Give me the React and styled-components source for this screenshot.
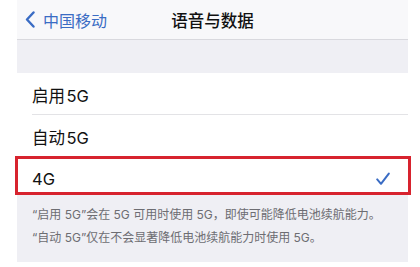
import React from 'react'
import styled, { createGlobalStyle } from 'styled-components'

const GlobalStyle = createGlobalStyle`
  html, body {
    margin: 0;
    padding: 0;
    background: #ffffff;
  }
  body {
    font-family: Inter, "Noto Sans CJK SC", sans-serif;
    -webkit-font-smoothing: antialiased;
  }
`

const options = [
  { label: '启用\u200a5G', selected: false },
  { label: '自动\u200a5G', selected: false },
  { label: '4G', selected: true },
]

function App() {
  return (
    <Page>
      <GlobalStyle />
      <Screen>
        <NavBar>
          <Back>
            <svg width="10" height="17" viewBox="0 0 10 17">
              <path d="M8.5 1.5 L2 8.5 L8.5 15.5" fill="none" stroke="#3a6cc4" strokeWidth="2.4" strokeLinecap="round" strokeLinejoin="round" />
            </svg>
            <span>中国移动</span>
          </Back>
          <Title>语音与数据</Title>
          <span />
        </NavBar>
        <Spacer />
        <List>
          {options.map((o, i) => (
            <Row key={o.label} selected={o.selected} last={i === options.length - 1}>
              <RowLabel>{o.label}</RowLabel>
              {o.selected && (
                <svg width="14" height="14" viewBox="0 0 14 14">
                  <path d="M1.2 7.4 L5 11.8 L12.8 1.6" fill="none" stroke="#3a6cc4" strokeWidth="2" strokeLinecap="round" strokeLinejoin="round" />
                </svg>
              )}
            </Row>
          ))}
        </List>
        <Footer>
          <p>“启用 5G”会在 5G 可用时使用 5G，即使可能降低电池续航能力。</p>
          <p>“自动 5G”仅在不会显著降低电池续航能力时使用 5G。</p>
        </Footer>
      </Screen>
    </Page>
  )
}

export default App

const Page = styled.div`
  width: 420px;
  height: 267px;
  overflow: hidden;
  background: #ffffff;
`

const Screen = styled.div`
  margin: 0 12px 0 17px;
  display: flex;
  flex-direction: column;
`

const NavBar = styled.div`
  height: 39px;
  background: #f8f8fa;
  border-bottom: 1px solid #d9d9de;
  display: grid;
  grid-template-columns: 1fr auto 1fr;
  align-items: center;
`

const Back = styled.div`
  display: flex;
  align-items: center;
  gap: 8px;
  padding-left: 8px;
  color: #3a6cc4;
  font-size: 16px;
  font-family: "Noto Sans CJK SC", sans-serif;
`

const Title = styled.div`
  font-size: 16.5px;
  font-weight: 500;
  color: #111111;
  font-family: "Noto Sans CJK SC", sans-serif;
`

const Spacer = styled.div`
  height: 33px;
  background: #efeff4;
`

const List = styled.div`
  background: #ffffff;
  display: flex;
  flex-direction: column;
`

const Row = styled.div`
  position: relative;
  height: ${p => (p.last ? '38px' : '42px')};
  padding: ${p => (p.last ? '6px 18px 0 15px' : '1px 18px 0 15px')};
  box-sizing: border-box;
  display: flex;
  align-items: center;
  justify-content: space-between;

  &::before {
    content: '';
    display: ${p => (p.last ? 'none' : 'block')};
    position: absolute;
    left: 15px;
    right: 0;
    bottom: 0;
    height: 1px;
    background: #e3e3e6;
  }

  &::after {
    content: '';
    display: ${p => (p.selected ? 'block' : 'none')};
    position: absolute;
    top: -1px;
    bottom: 0;
    left: -2px;
    right: -3px;
    border: 3px solid #d7232e;
  }
`

const RowLabel = styled.span`
  font-size: 16.5px;
  color: #111111;
`

const Footer = styled.div`
  background: #efeff4;
  padding: 8px 15px 13px;
  color: #6d6d72;
  font-size: 12px;

  p {
    margin: 0;
    line-height: 23px;
    white-space: nowrap;
  }
`
